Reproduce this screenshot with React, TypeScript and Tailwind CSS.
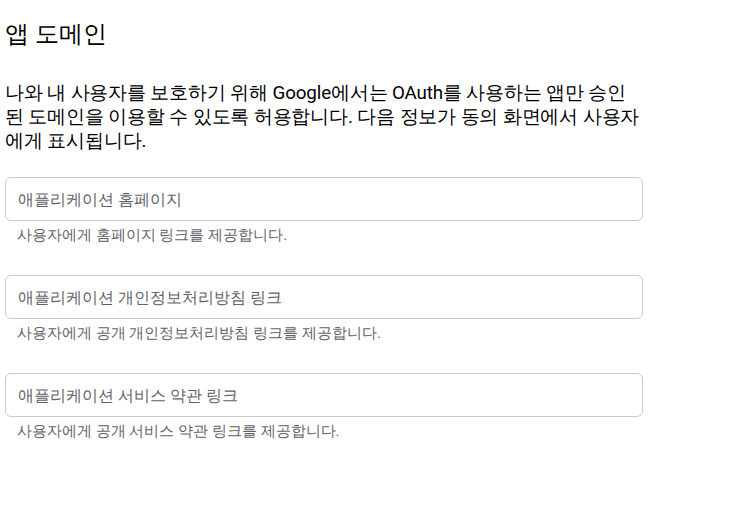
import React from 'react';

const fields = [
  { placeholder: '애플리케이션 홈페이지', help: '사용자에게 홈페이지 링크를 제공합니다.' },
  { placeholder: '애플리케이션 개인정보처리방침 링크', help: '사용자에게 공개 개인정보처리방침 링크를 제공합니다.' },
  { placeholder: '애플리케이션 서비스 약관 링크', help: '사용자에게 공개 서비스 약관 링크를 제공합니다.' },
];

const App: React.FC = () => {
  return (
    <div className="min-h-screen bg-white pl-[5px] pt-[18px] font-['Roboto',sans-serif] text-[#202124]">
      <div className="w-[638px]">
        <h1 className="text-[24px] leading-[32px] text-black">앱 도메인</h1>
        <p className="mt-[31px] w-[637px] text-[18.8px] leading-[24px] tracking-[-0.15px] text-black">
          나와 내 사용자를 보호하기 위해 Google에서는 OAuth를 사용하는 앱만 승인된 도메인을 이용할 수 있도록 허용합니다. 다음 정보가 동의 화면에서 사용자에게 표시됩니다.
        </p>
        <div className="mt-[24px] flex flex-col gap-[10px]">
          {fields.map((f) => (
            <div key={f.placeholder} className="h-[88px]">
              <input
                type="text"
                placeholder={f.placeholder}
                className="h-[44px] w-full rounded-[6px] border border-[#cccccc] px-[12px] text-[16px] text-[#202124] outline-none placeholder:text-[#5f6368]"
              />
              <div className="mt-[4px] pl-[12px] text-[15px] leading-[20px] text-[#5f6368]">{f.help}</div>
            </div>
          ))}
        </div>
      </div>
    </div>
  );
};

export default App;
